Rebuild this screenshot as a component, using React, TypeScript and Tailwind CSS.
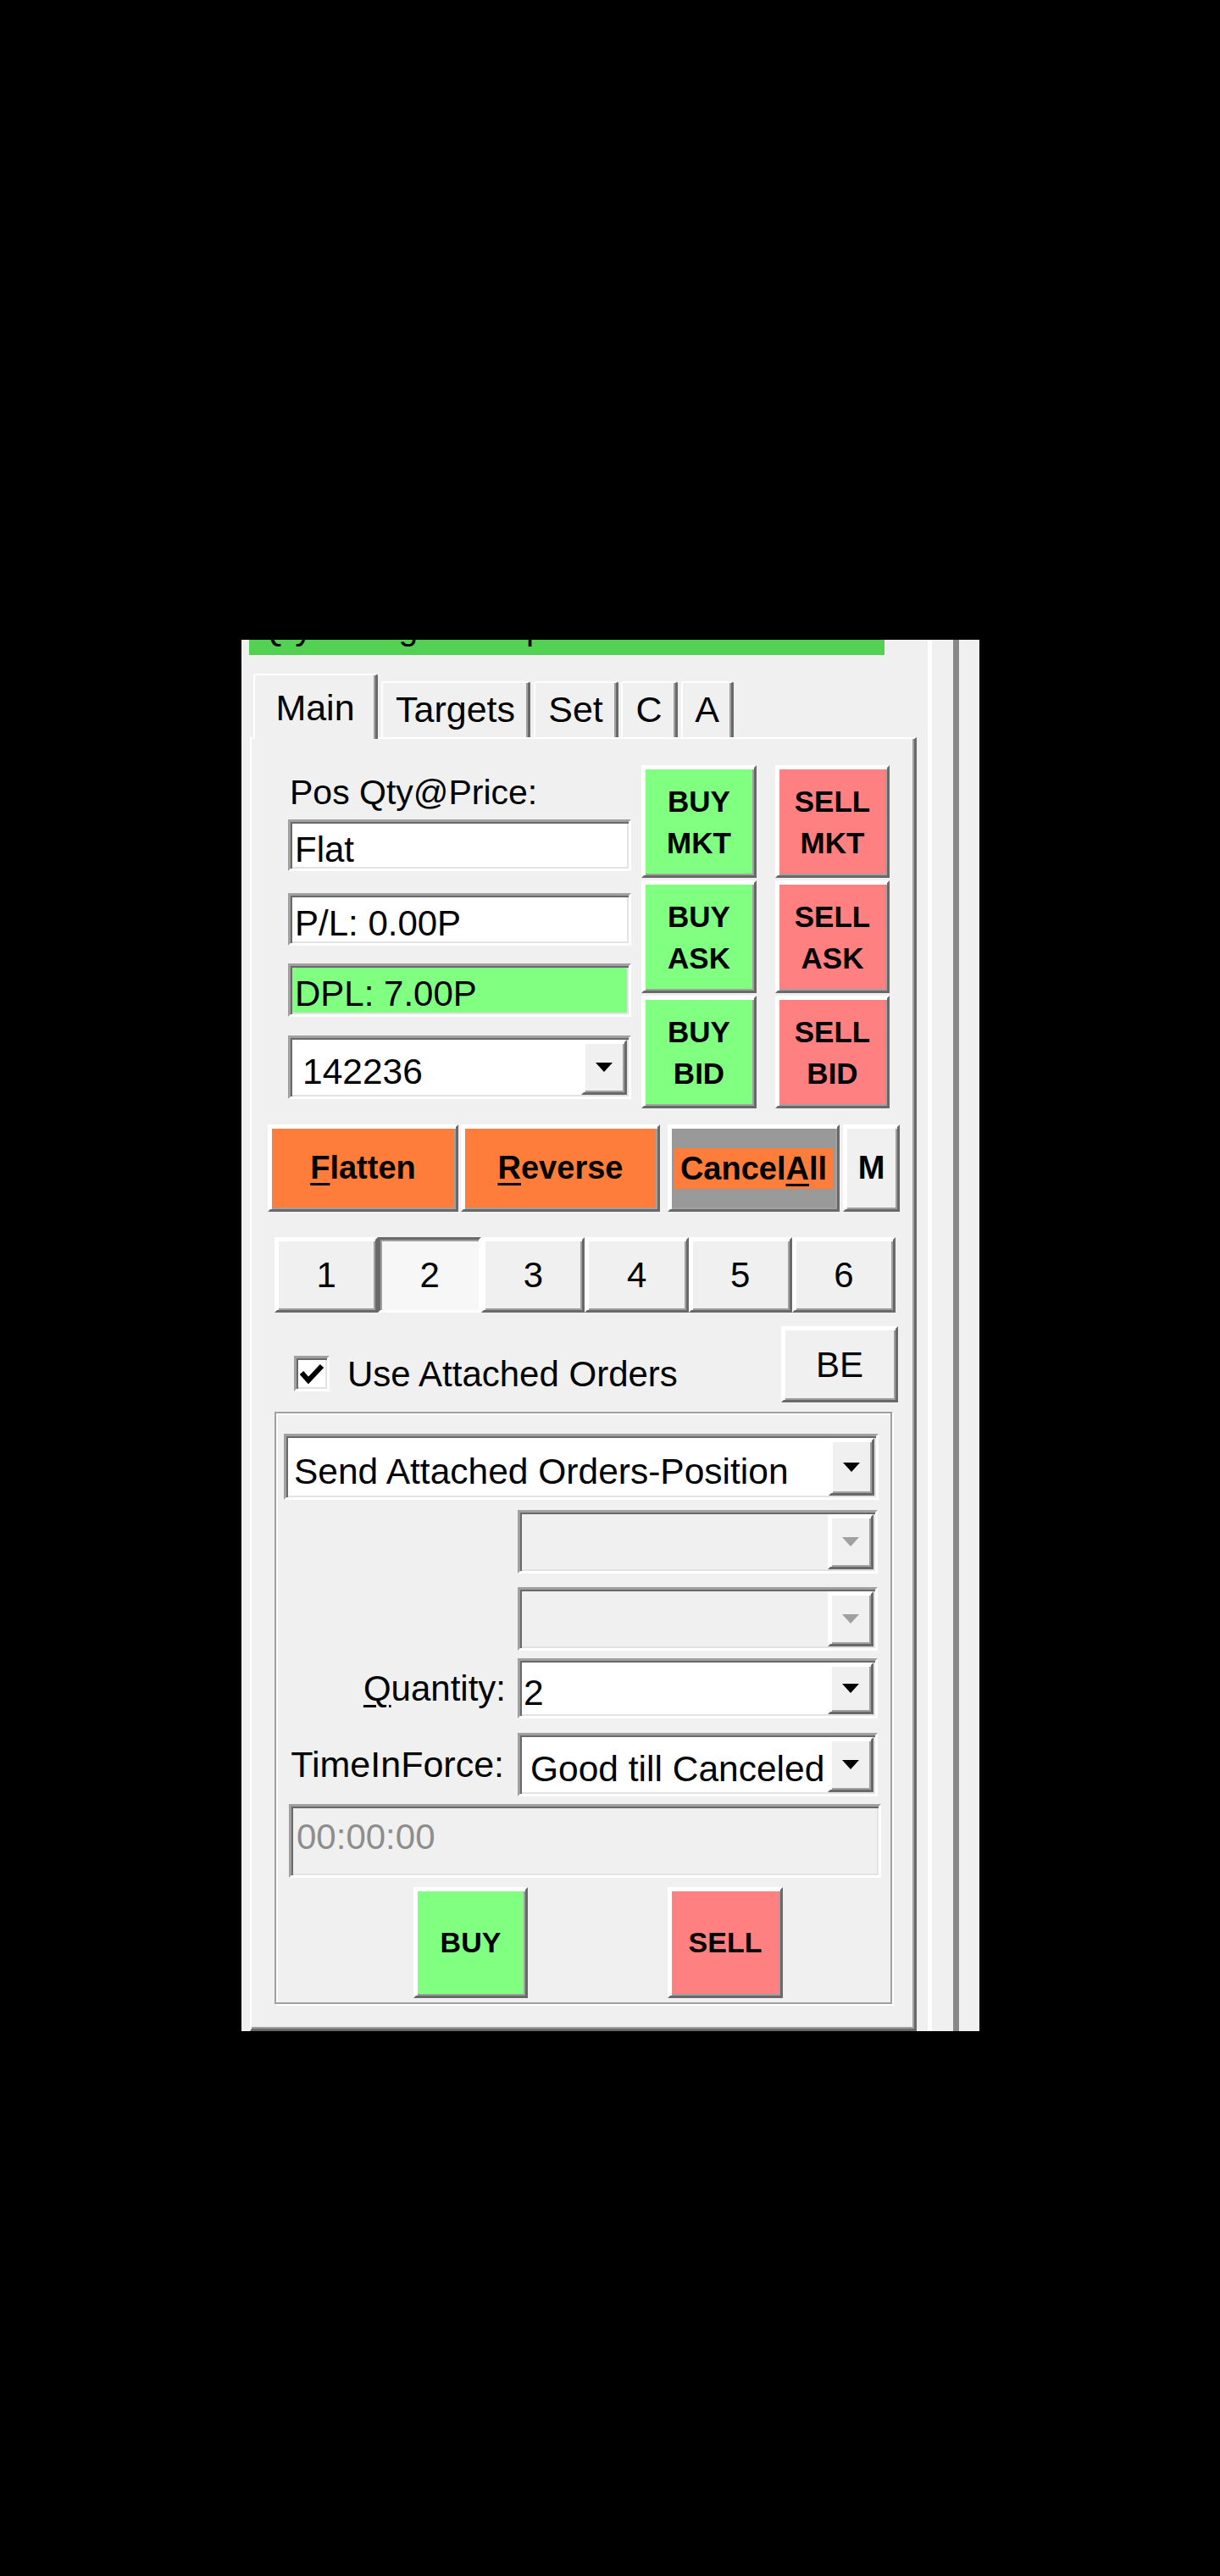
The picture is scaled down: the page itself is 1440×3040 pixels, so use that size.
import React from 'react';

// Win32-style bevels, reused by every control on the order panel
const raised =
  'border-[3px] border-t-white border-l-white border-b-[#696969] border-r-[#696969] shadow-[inset_2px_2px_0_#fff,inset_-2px_-2px_0_#a0a0a0]';
const sunken =
  'border-[3px] border-t-[#a0a0a0] border-l-[#a0a0a0] border-b-white border-r-white shadow-[inset_2px_2px_0_#696969,inset_-2px_-2px_0_#e3e3e3]';
const pressed =
  'border-[3px] border-t-[#696969] border-l-[#696969] border-b-white border-r-white shadow-[inset_2px_2px_0_#a0a0a0]';

const GREEN = 'bg-[#80ff80]';
const RED = 'bg-[#ff8080]';
const ORANGE = 'bg-[#ff7d3b]';

function Arrow({ disabled }: { disabled?: boolean }) {
  return (
    <svg width="20" height="11" viewBox="0 0 20 11">
      <polygon points="0,0 20,0 10,11" fill={disabled ? '#a0a0a0' : '#000'} />
    </svg>
  );
}

function Combo({
  value = '',
  className = '',
  pad = 'pl-[8px]',
  disabled,
}: {
  value?: string;
  className?: string;
  pad?: string;
  disabled?: boolean;
}) {
  return (
    <div className={`${sunken} flex p-[2px] ${disabled ? 'bg-[#f0f0f0]' : 'bg-white'} ${className}`}>
      <div className={`flex flex-1 items-center overflow-hidden whitespace-nowrap pt-[10px] text-[42.5px] leading-[41px] ${pad}`}>
        {value}
      </div>
      <div className={`${raised} flex w-[54px] items-center justify-center bg-[#f0f0f0]`}>
        <Arrow disabled={disabled} />
      </div>
    </div>
  );
}

function Field({ children, className = '' }: { children: React.ReactNode; className?: string }) {
  return (
    <div className={`${sunken} pl-[5px] pt-[12px] text-[42px] leading-[41px] whitespace-nowrap ${className}`}>
      {children}
    </div>
  );
}

function Tab({ label, width, selected }: { label: string; width: string; selected?: boolean }) {
  return (
    <div
      className={`${width} rounded-t-[3px] border-t-2 border-l-2 border-r-[3px] border-t-white border-l-white border-r-[#696969] bg-[#f0f0f0] text-center text-[43px] leading-[43px] shadow-[inset_-2px_0_0_#a0a0a0] ${
        selected ? 'relative z-10 -mb-[2px] h-[77px] pt-[17px]' : 'mt-[9px] h-[66px] pt-[10px]'
      }`}
    >
      {label}
    </div>
  );
}

const Mnemonic = ({ children }: { children: React.ReactNode }) => (
  <span className="underline decoration-[3px] underline-offset-[5px]">{children}</span>
);

const orderButtons: { top: string; bottom: string; color: string }[] = [
  { top: 'BUY', bottom: 'MKT', color: GREEN },
  { top: 'SELL', bottom: 'MKT', color: RED },
  { top: 'BUY', bottom: 'ASK', color: GREEN },
  { top: 'SELL', bottom: 'ASK', color: RED },
  { top: 'BUY', bottom: 'BID', color: GREEN },
  { top: 'SELL', bottom: 'BID', color: RED },
];

function TabPage() {
  return (
    <div className="ml-[10px] w-[787px] border-t-2 border-l-2 border-r-[3px] border-b-[3px] border-t-white border-l-white border-r-[#696969] border-b-[#696969] pb-[29px] shadow-[inset_-2px_-2px_0_#a0a0a0]">
      {/* position readouts + quick order buttons */}
      <div className="flex">
        <div className="ml-[43px] w-[405px]">
          <div className="mt-[43px] pl-[2px] text-[41px] leading-[41px]">Pos Qty@Price:</div>
          <Field className="mt-[11px] h-[61px] bg-white">Flat</Field>
          <Field className="mt-[26px] h-[62px] bg-white">P/L: 0.00P</Field>
          <Field className={`mt-[21px] h-[63px] ${GREEN}`}>DPL: 7.00P</Field>
          <Combo className="mt-[22px] h-[75px]" value="142236" pad="pl-[12px]" />
        </div>
        <div className="ml-[12px] mt-[31px] grid grid-cols-[136px_135px] auto-rows-[133px] gap-x-[22px] gap-y-[3px]">
          {orderButtons.map((b, i) => (
            <button
              key={i}
              className={`${raised} ${b.color} flex flex-col items-center justify-center text-[35px] font-bold leading-[49px]`}
            >
              <span>{b.top}</span>
              <span>{b.bottom}</span>
            </button>
          ))}
        </div>
      </div>

      {/* position actions */}
      <div className="ml-[19px] mt-[19px] flex h-[103px] text-[38px] font-bold">
        <button className={`${raised} ${ORANGE} w-[225px]`}>
          <Mnemonic>F</Mnemonic>latten
        </button>
        <button className={`${raised} ${ORANGE} ml-[3px] w-[235px]`}>
          <Mnemonic>R</Mnemonic>everse
        </button>
        <button className={`${raised} ml-[9px] flex w-[203px] items-center justify-center bg-[#999]`}>
          <span className={`${ORANGE} px-[7px] leading-[48px]`}>
            Cancel<Mnemonic>A</Mnemonic>ll
          </span>
        </button>
        <button className={`${raised} ml-[4px] w-[67px] bg-[#f0f0f0]`}>M</button>
      </div>

      {/* ATM strategy slots */}
      <div className="ml-[27px] mt-[30px] grid h-[89px] w-[733px] grid-cols-6">
        {['1', '2', '3', '4', '5', '6'].map((n) => (
          <div
            key={n}
            className={`${n === '2' ? `${pressed} bg-[#f7f7f7]` : raised} flex items-center justify-center text-[42px] leading-[42px]`}
          >
            {n}
          </div>
        ))}
      </div>

      <div className="ml-[27px] mt-[16px] flex h-[90px] w-[736px] justify-between">
        <div className="mt-[35px] flex h-[42px] items-center pl-[23px]">
          <div className={`${sunken} flex h-[42px] w-[42px] items-center justify-center bg-white`}>
            <svg width="30" height="24" viewBox="0 0 30 24">
              <polyline points="3,11 11,20 27,3" fill="none" stroke="#000" strokeWidth="6" />
            </svg>
          </div>
          <span className="ml-[21px] text-[42px] leading-[41px]">Use Attached Orders</span>
        </div>
        <button className={`${raised} w-[138px] text-[42px]`}>BE</button>
      </div>

      {/* attached orders group */}
      <div className="ml-[27px] mt-[11px] h-[699px] w-[729px] border-2 border-[#a0a0a0] shadow-[inset_2px_2px_0_#fff,2px_2px_0_#fff]">
        <Combo className="ml-[9px] mt-[24px] h-[78px] w-[702px]" value="Send Attached Orders-Position" pad="pl-[7px]" />
        <div className="ml-[9px] mt-[12px] flex h-[75px] items-center">
          <div className="w-[276px]" />
          <Combo className="h-full w-[425px]" disabled />
        </div>
        <div className="ml-[9px] mt-[16px] flex h-[75px] items-center">
          <div className="w-[276px]" />
          <Combo className="h-full w-[425px]" disabled />
        </div>
        <div className="ml-[9px] mt-[9px] flex h-[71px] items-center">
          <div className="w-[276px] pr-[14px] text-right text-[42px] leading-[41px]">
            <Mnemonic>Q</Mnemonic>uantity:
          </div>
          <Combo className="h-full w-[425px]" value="2" pad="pl-[2px]" />
        </div>
        <div className="ml-[9px] mt-[17px] flex h-[75px] items-center">
          <div className="w-[276px] pr-[16px] text-right text-[43px] leading-[41px]">TimeInForce:</div>
          <Combo className="h-full w-[425px]" value="Good till Canceled" pad="pl-[10px]" />
        </div>
        <div
          className={`${sunken} ml-[15px] mt-[9px] h-[87px] w-[699px] bg-[#f0f0f0] pl-[6px] pt-[15px] text-[42px] leading-[41px] text-[#8d8d8d]`}
        >
          00:00:00
        </div>
        <div className="mt-[11px] flex text-[34px] font-bold">
          <button className={`${raised} ${GREEN} ml-[162px] h-[131px] w-[135px]`}>BUY</button>
          <button className={`${raised} ${RED} ml-[165px] h-[131px] w-[136px]`}>SELL</button>
        </div>
      </div>
    </div>
  );
}

export default function App() {
  return (
    <div className="min-h-[3040px] w-full bg-black pt-[755px] font-['Liberation_Sans',Arial,sans-serif] text-black">
      <div className="ml-[285px] flex w-[871px] bg-[#f0f0f0]">
        <div className="w-[810px]">
          {/* status strip, scrolled partly out of view */}
          <div className="ml-[9px] h-[18px] w-[750px] overflow-hidden bg-[#52d152]">
            <div className="-mt-[34px] whitespace-nowrap pl-[11px] text-[41px] leading-[41px]">
              Qty:2 Targets:Stops Match
            </div>
          </div>

          <div className="ml-[14px] mt-[22px] flex h-[75px] items-start">
            <Tab label="Main" width="w-[147px]" selected />
            <div className="ml-[4px]">
              <Tab label="Targets" width="w-[176px]" />
            </div>
            <div className="ml-[4px]">
              <Tab label="Set" width="w-[100px]" />
            </div>
            <div className="ml-[3px]">
              <Tab label="C" width="w-[67px]" />
            </div>
            <div className="ml-[4px]">
              <Tab label="A" width="w-[62px]" />
            </div>
          </div>

          <TabPage />
        </div>

        {/* splitter edge */}
        <div className="flex w-[61px]">
          <div className="w-[5px] bg-white" />
          <div className="w-[25px]" />
          <div className="w-[7px] bg-[#888]" />
        </div>
      </div>
    </div>
  );
}
